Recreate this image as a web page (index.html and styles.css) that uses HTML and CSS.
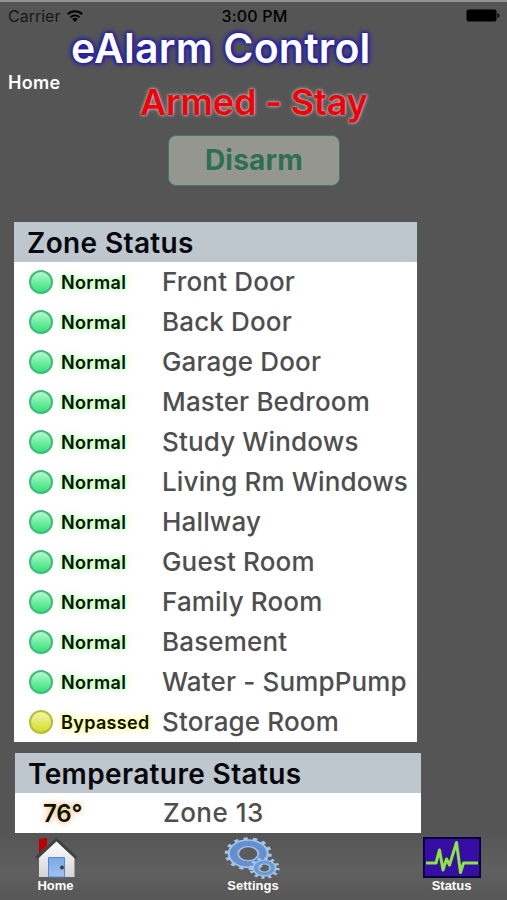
FILE: index.html
```html
<!DOCTYPE html>
<html lang="en">
<head>
<meta charset="utf-8">
<title>eAlarm Control</title>
<link rel="stylesheet" href="styles.css">
</head>
<body>
<header class="statusbar">
  <div class="carrier"><span>Carrier</span>
    <svg width="16" height="12" viewBox="0 0 16 12"><g fill="none" stroke="#000" stroke-width="2"><path d="M.8 4.2a10.5 10.5 0 0 1 14.4 0"/><path d="M3.500 7.2a6.800 6.800 0 0 1 9 0"/></g><path d="M5.300 9.100a4 4 0 0 1 5.400 0L8 12z"/></svg>
  </div>
  <div class="time">3:00 PM</div>
  <svg class="battery" width="34" height="13" viewBox="0 0 34 13"><rect x=".5" y=".5" width="30" height="12" rx="2"/><path d="M31.500 4q2 .5 2 2.500t-2 2.500z"/></svg>
</header>
<h1 class="title">eAlarm Control</h1>
<div class="home-link">Home</div>
<div class="state">Armed - Stay</div>
<button class="disarm">Disarm</button>
<main>
  <section class="panel">
    <h2>Zone Status</h2>
    <ul>
      <li><i class="dot"></i><b>Normal</b><span>Front Door</span></li>
      <li><i class="dot"></i><b>Normal</b><span>Back Door</span></li>
      <li><i class="dot"></i><b>Normal</b><span>Garage Door</span></li>
      <li><i class="dot"></i><b>Normal</b><span>Master Bedroom</span></li>
      <li><i class="dot"></i><b>Normal</b><span>Study Windows</span></li>
      <li><i class="dot"></i><b>Normal</b><span>Living Rm Windows</span></li>
      <li><i class="dot"></i><b>Normal</b><span>Hallway</span></li>
      <li><i class="dot"></i><b>Normal</b><span>Guest Room</span></li>
      <li><i class="dot"></i><b>Normal</b><span>Family Room</span></li>
      <li><i class="dot"></i><b>Normal</b><span>Basement</span></li>
      <li><i class="dot"></i><b>Normal</b><span>Water - SumpPump</span></li>
      <li class="bypassed"><i class="dot"></i><b>Bypassed</b><span>Storage Room</span></li>
    </ul>
  </section>
  <section class="panel temperature">
    <h2>Temperature Status</h2>
    <ul><li><b>76°</b><span>Zone 13</span></li></ul>
  </section>
</main>
<nav class="tabs">
  <a class="tab tab-home">
    <svg width="44" height="42" viewBox="0 0 44 42">
      <defs><linearGradient id="wall" x2="0" y2="1"><stop stop-color="#fff"/><stop offset="1" stop-color="#d4d4d6"/></linearGradient><linearGradient id="door" x2="0" y2="1"><stop stop-color="#78a7e5"/><stop offset="1" stop-color="#a1c3ee"/></linearGradient></defs>
      <path d="M5 2q4-1 8-1v8l-8 7z" fill="#b90007"/>
      <path d="M22.500 4L5 21v19h35.500V21z" fill="url(#wall)"/>
      <path d="M2 21L22.500 2.500l20 18.500" fill="none" stroke="#414244" stroke-width="3"/>
      <path d="M14.500 20.500h16V40h-16z" fill="url(#door)" stroke="#5588cc"/>
      <circle cx="28" cy="30.500" r="2" fill="#344253"/>
    </svg><span>Home</span></a>
  <a class="tab tab-settings">
    <svg width="60" height="44" viewBox="0 0 60 44">
      <g transform="translate(25 17.500) scale(1.2 .84)" fill="none"><circle r="18" stroke="#a8c6ec" stroke-width="5" pathLength="140" stroke-dasharray="4.500 5.500"/><circle r="13" stroke="#a3c2ea" stroke-width="10"/><circle r="12.800" stroke="#6590cf" stroke-width="6.500"/></g>
      <g transform="translate(42 32.500) scale(1.18 .84)" fill="none"><circle r="11.500" stroke="#a8c6ec" stroke-width="4" pathLength="120" stroke-dasharray="4.500 5.500"/><circle r="7.500" stroke="#a6c6ec" stroke-width="6.500"/><circle r="7.500" stroke="#6d9ad7" stroke-width="3.800"/></g>
    </svg><span>Settings</span></a>
  <a class="tab tab-status">
    <svg width="58" height="42" viewBox="0 0 58 42"><rect x="1" y="1" width="56" height="39" fill="#360da5" stroke="#07003a" stroke-width="2"/><path d="M3 26h10l3.500-13 3.500 20 3.500-11 3 6 7-22.500 4 30 3-9.500h14.500" fill="none" stroke="#8be53b" stroke-width="3" stroke-linejoin="round"/></svg>
    <span>Status</span></a>
</nav>
</body>
</html>
```
FILE: styles.css
```css
* { box-sizing: border-box; }
body {
  margin: 0;
  width: 507px;
  height: 900px;
  overflow: hidden;
  display: flex;
  flex-direction: column;
  background: #555;
  border-top: 2px solid #929292;
  font-family: Inter, "Liberation Sans", sans-serif;
  white-space: nowrap;
}
h1, h2, ul { margin: 0; padding: 0; }
.statusbar {
  height: 27px;
  flex: none;
  display: grid;
  grid-template-columns: 1fr auto 1fr;
  align-items: center;
  padding: 0 7px 0 8px;
  color: #171717;
  font-size: 16px;
  line-height: 18px;
}
.carrier { display: flex; gap: 7px; align-items: center; }
.time { padding-left: 1px; color: #000; font-weight: 500; letter-spacing: .2px; }
.battery { justify-self: end; }
.title {
  height: 40px;
  padding-left: 71px;
  color: #fff;
  font-size: 41px;
  font-weight: 600;
  letter-spacing: .2px;
  line-height: 38px;
  text-shadow: 0 0 3px #1b13bd, 0 0 4px #1b13bd, 0 0 6px #1b13bd;
}
.home-link {
  height: 17px;
  padding-left: 8px;
  color: #fff;
  font-size: 18px;
  font-weight: 600;
  letter-spacing: .3px;
  line-height: 28px;
}
.state {
  height: 49px;
  padding-left: 140px;
  color: #f20008;
  font-size: 36px;
  font-weight: 600;
  letter-spacing: -.15px;
  line-height: 33px;
  text-shadow: 0 0 2px #ddd, 0 0 4px #aaa;
}
.disarm {
  width: 172px;
  height: 51px;
  flex: none;
  margin: 1px 0 36px 168px;
  padding: 0;
  border: 1px solid #397e65;
  border-radius: 8px;
  background: #969690;
  color: #2c7052;
  font: 700 28px/49px Inter, sans-serif;
  letter-spacing: .2px;
}
.panel { width: 403px; margin-left: 14px; background: #fff; }
.panel h2 {
  height: 40px;
  padding-left: 13px;
  background: #bec6ce;
  color: #05070b;
  font-size: 28px;
  font-weight: 600;
  letter-spacing: .37px;
  line-height: 42px;
}
.panel ul { list-style: none; }
.panel li {
  height: 40px;
  display: grid;
  grid-template-columns: 32px 101px 1fr;
  align-items: center;
  padding-left: 15px;
  font-size: 26px;
  font-weight: 500;
  letter-spacing: .15px;
  color: #4e4e4e;
}
.panel li span { padding-bottom: 1px; }
.dot {
  width: 24px;
  height: 24px;
  border: 2px solid #3cbb7b;
  border-radius: 50%;
  background: linear-gradient(#b8f8d0, #79efa6 45%, #38df79);
}
.panel b {
  color: #071407;
  font-size: 18px;
  font-weight: 600;
  letter-spacing: .35px;
  text-shadow: 0 0 4px #a5ff9d, 0 0 8px #b5ffac;
}
.bypassed .dot { border-color: #b3bf35; background: linear-gradient(#f2f4a8, #e4ea66 50%, #d1dc2d); }
.panel .bypassed b { text-shadow: 0 0 4px #fff879, 0 0 8px #fff879; }
.temperature { width: 406px; margin: 11px 0 0 15px; }
.temperature li { grid-template-columns: 120px 1fr; padding-left: 28px; }
.panel.temperature b { font-size: 24px; letter-spacing: -.2px; text-shadow: 0 0 5px #ffc58c, 0 0 9px #ffcda0; }
.temperature li span { letter-spacing: .5px; }
.tabs {
  height: 67px;
  flex: none;
  display: grid;
  grid-template-columns: 111px 284px 113px;
  padding-top: 4px;
  background: linear-gradient(#555, #606060 55%, #575757);
}
.tab {
  display: flex;
  flex-direction: column;
  align-items: center;
  color: #fff;
  font: bold 13px/14px "Liberation Sans", sans-serif;
}
.tab svg { height: 42px; overflow: visible; }
```
